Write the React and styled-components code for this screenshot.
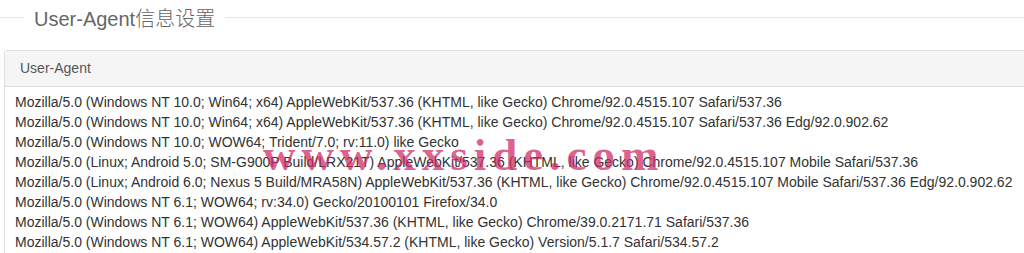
import styled, { createGlobalStyle } from "styled-components";

const GlobalStyle = createGlobalStyle`
  html, body {
    margin: 0;
    padding: 0;
    background: #fff;
    overflow: hidden;
  }
  body {
    font-family: "Liberation Sans", Arial, "Noto Sans CJK SC", sans-serif;
    color: #333;
  }
`;

const Page = styled.div`
  width: 1024px;
  height: 253px;
  overflow: hidden;
`;

const Legend = styled.div`
  display: flex;
  align-items: center;
  height: 34px;
`;

const Rule = styled.div`
  height: 1px;
  background: #e6e6e6;
  width: ${(p) => (p.$grow ? "auto" : "24px")};
  flex: ${(p) => (p.$grow ? 1 : "none")};
`;

const LegendText = styled.span`
  padding: 0 10px;
  font-size: 20px;
  font-weight: 300;
  color: #666;
  font-family: "Liberation Sans", Arial, "Noto Sans CJK SC", sans-serif;
`;

const Panel = styled.div`
  position: relative;
  margin: 16px -20px 0 4px;
  border: 1px solid #ddd;
  border-radius: 3px;
  background: #fff;
`;

const PanelHeading = styled.div`
  height: 35px;
  line-height: 35px;
  padding: 0 15px;
  background: #f5f5f5;
  border-bottom: 1px solid #ddd;
  font-size: 14px;
  color: #555;
`;

const PanelBody = styled.div`
  padding: 5px 10px 10px;
`;

const Row = styled.div`
  font-size: 14px;
  line-height: 20px;
  color: #333;
  white-space: nowrap;
`;

const Watermark = styled.div`
  position: absolute;
  left: 258px;
  top: 78px;
  font-family: "Liberation Serif", "Times New Roman", serif;
  font-weight: bold;
  font-size: 45px;
  letter-spacing: 6px;
  color: rgba(205, 40, 100, 0.72);
  pointer-events: none;
  white-space: nowrap;
`;

const agents = [
  "Mozilla/5.0 (Windows NT 10.0; Win64; x64) AppleWebKit/537.36 (KHTML, like Gecko) Chrome/92.0.4515.107 Safari/537.36",
  "Mozilla/5.0 (Windows NT 10.0; Win64; x64) AppleWebKit/537.36 (KHTML, like Gecko) Chrome/92.0.4515.107 Safari/537.36 Edg/92.0.902.62",
  "Mozilla/5.0 (Windows NT 10.0; WOW64; Trident/7.0; rv:11.0) like Gecko",
  "Mozilla/5.0 (Linux; Android 5.0; SM-G900P Build/LRX21T) AppleWebKit/537.36 (KHTML, like Gecko) Chrome/92.0.4515.107 Mobile Safari/537.36",
  "Mozilla/5.0 (Linux; Android 6.0; Nexus 5 Build/MRA58N) AppleWebKit/537.36 (KHTML, like Gecko) Chrome/92.0.4515.107 Mobile Safari/537.36 Edg/92.0.902.62",
  "Mozilla/5.0 (Windows NT 6.1; WOW64; rv:34.0) Gecko/20100101 Firefox/34.0",
  "Mozilla/5.0 (Windows NT 6.1; WOW64) AppleWebKit/537.36 (KHTML, like Gecko) Chrome/39.0.2171.71 Safari/537.36",
  "Mozilla/5.0 (Windows NT 6.1; WOW64) AppleWebKit/534.57.2 (KHTML, like Gecko) Version/5.1.7 Safari/534.57.2",
];

const App = () => {
  return (
    <Page>
      <GlobalStyle />
      <Legend>
        <Rule />
        <LegendText>User-Agent信息设置</LegendText>
        <Rule $grow />
      </Legend>
      <Panel>
        <PanelHeading>User-Agent</PanelHeading>
        <PanelBody>
          {agents.map((ua, i) => (
            <Row key={i}>{ua}</Row>
          ))}
        </PanelBody>
        <Watermark>www.xxside.com</Watermark>
      </Panel>
    </Page>
  );
};

export default App;
